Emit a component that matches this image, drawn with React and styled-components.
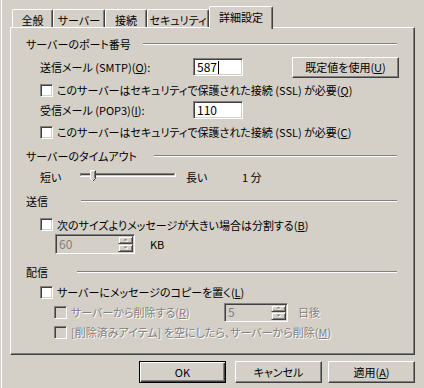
import React from 'react';
import styled, { createGlobalStyle } from 'styled-components';

const Global = createGlobalStyle`
  html, body { margin: 0; padding: 0; background: #D4D0C8; }
  body { font-family: "Noto Sans CJK JP", "Noto Sans", sans-serif; font-size: 11px; }
`;

const Window = styled.div`
  box-sizing: border-box;
  width: 424px;
  height: 388px;
  padding: 6px 9px 0 10px;
  background: linear-gradient(to right, #D4D0C8 1px, #fff 1px, #fff 2px, #D4D0C8 2px);
  font-family: "Noto Sans CJK JP", "Noto Sans", sans-serif;
  font-size: 11px;
  line-height: 14px;
  color: #000;
  font-feature-settings: "palt";
  display: flex;
  flex-direction: column;
`;

const TabStrip = styled.div`
  display: flex;
  align-items: flex-end;
  height: 21px;
  padding-left: 2px;
  flex-shrink: 0;
`;

const Tab = styled.div`
  box-sizing: border-box;
  width: ${p => p.$w}px;
  height: ${p => (p.$active ? 23 : 18)}px;
  margin-bottom: ${p => (p.$active ? -2 : 0)}px;
  padding-top: ${p => (p.$active ? 0 : 2)}px;
  padding-bottom: ${p => (p.$active ? 3 : 0)}px;
  display: flex;
  align-items: center;
  justify-content: center;
  background: #D4D0C8;
  border-left: 1px solid #fff;
  border-top: 1px solid #fff;
  border-right: 1px solid #404040;
  box-shadow: inset -1px 0 0 #808080, inset 1px 1px 0 #D4D0C8;
  border-top-left-radius: 2px;
  border-top-right-radius: 2px;
  position: relative;
  z-index: ${p => (p.$active ? 1 : 0)};
  white-space: nowrap;
`;

const Panel = styled.div`
  box-sizing: border-box;
  width: 405px;
  height: 328px;
  flex-shrink: 0;
  border: 1px solid;
  border-color: #fff #404040 #404040 #fff;
  box-shadow: inset -1px -1px 0 #808080, inset 1px 1px 0 #D4D0C8;
  padding: 1px;
  display: flex;
  flex-direction: column;
`;

const Row = styled.div`
  display: flex;
  align-items: center;
  flex-shrink: 0;
  height: ${p => p.$h || 20}px;
  margin-top: ${p => p.$mt || 0}px;
  padding-left: ${p => p.$indent || 28}px;
  white-space: nowrap;
`;

const GroupLabel = styled.span`
  width: ${p => p.$w}px;
  flex-shrink: 0;
`;

const Etched = styled.div`
  flex: 1;
  box-sizing: border-box;
  height: 2px;
  margin-right: 16px;
  border-top: 1px solid #808080;
  border-bottom: 1px solid #fff;
`;

const Label = styled.span`
  width: ${p => (p.$w ? `${p.$w}px` : 'auto')};
  margin-left: ${p => p.$ml || 0}px;
  flex-shrink: 0;
  color: ${p => (p.$disabled ? '#808080' : '#000')};
  text-shadow: ${p => (p.$disabled ? '1px 1px 0 #fff' : 'none')};
`;

const Edit = styled.div`
  box-sizing: border-box;
  width: ${p => p.$w}px;
  height: ${p => p.$h}px;
  border: 1px solid;
  border-color: #808080 #fff #fff #808080;
  box-shadow: inset 1px 1px 0 #404040, inset -1px -1px 0 #D4D0C8;
  background: ${p => (p.$disabled ? '#D4D0C8' : '#fff')};
  color: ${p => (p.$disabled ? '#808080' : '#000')};
  display: flex;
  align-items: center;
  padding: 1px 1px 1px 3px;
  flex-shrink: 0;
  font-size: 12px;
`;

const Caret = styled.span`
  display: inline-block;
  width: 1px;
  height: 13px;
  background: #000;
  margin-left: 1px;
`;

const EditText = styled.span`
  flex: 1;
`;

const SpinCol = styled.div`
  display: flex;
  flex-direction: column;
  width: 15px;
  align-self: stretch;
`;

const SpinBtn = styled.div`
  flex: 1;
  box-sizing: border-box;
  border: 1px solid;
  border-color: #D4D0C8 #404040 #404040 #D4D0C8;
  box-shadow: inset 1px 1px 0 #fff, inset -1px -1px 0 #808080;
  background: #D4D0C8;
  display: flex;
  align-items: center;
  justify-content: center;
`;

const Button = styled.div`
  box-sizing: border-box;
  width: ${p => p.$w}px;
  height: ${p => p.$h || 22}px;
  margin-left: ${p => p.$ml || 0}px;
  display: flex;
  align-items: center;
  justify-content: center;
  flex-shrink: 0;
  background: #D4D0C8;
  border: 1px solid;
  border-color: ${p => (p.$default ? '#000' : '#fff #404040 #404040 #fff')};
  box-shadow: ${p =>
    p.$default
      ? 'inset 1px 1px 0 #fff, inset -1px -1px 0 #404040, inset -2px -2px 0 #808080'
      : 'inset -1px -1px 0 #808080'};
`;

const Check = styled.div`
  box-sizing: border-box;
  width: 13px;
  height: 13px;
  flex-shrink: 0;
  border: 1px solid;
  border-color: #808080 #fff #fff #808080;
  box-shadow: inset 1px 1px 0 #404040, inset -1px -1px 0 #D4D0C8;
  background: ${p => (p.$disabled ? '#D4D0C8' : '#fff')};
  margin-right: 4px;
`;

const ButtonRow = styled.div`
  display: flex;
  justify-content: flex-end;
  margin-top: 6px;
`;

const Arrow = ({ up }) => (
  <svg width="5" height="4" viewBox="0 0 5 4">
    {up ? (
      <>
        <polygon points="2.5,0.5 4.5,2.5 0.5,2.5" fill="#fff" transform="translate(1,1)" />
        <polygon points="2.5,0.5 4.5,2.5 0.5,2.5" fill="#808080" />
      </>
    ) : (
      <>
        <polygon points="0.5,0.5 4.5,0.5 2.5,2.5" fill="#fff" transform="translate(1,1)" />
        <polygon points="0.5,0.5 4.5,0.5 2.5,2.5" fill="#808080" />
      </>
    )}
  </svg>
);

const Spinner = ({ w, h, value }) => (
  <Edit $w={w} $h={h} $disabled>
    <EditText>{value}</EditText>
    <SpinCol>
      <SpinBtn><Arrow up /></SpinBtn>
      <SpinBtn><Arrow /></SpinBtn>
    </SpinCol>
  </Edit>
);

const Slider = () => (
  <svg width="96" height="12" viewBox="0 0 96 12" style={{ flexShrink: 0, marginTop: -2 }}>
    <rect x="0" y="3" width="95" height="1" fill="#808080" />
    <rect x="0" y="3" width="1" height="4" fill="#808080" />
    <rect x="1" y="4" width="93" height="1" fill="#404040" />
    <rect x="1" y="5" width="93" height="1" fill="#D4D0C8" />
    <rect x="0" y="6" width="96" height="1" fill="#fff" />
    <rect x="95" y="3" width="1" height="4" fill="#fff" />
    <polygon points="10,0 16,0 16,8 13,11 10,8" fill="#D4D0C8" />
    <polyline points="10.5,8.5 10.5,0.5 15.5,0.5" fill="none" stroke="#fff" strokeWidth="1" />
    <polyline points="15.5,0.5 15.5,8.5 13,11" fill="none" stroke="#404040" strokeWidth="1" />
    <polyline points="14.5,1.5 14.5,8" fill="none" stroke="#808080" strokeWidth="1" />
    <line x1="10.5" y1="8.5" x2="13" y2="11" stroke="#fff" strokeWidth="1" />
  </svg>
);

const Header = ({ children, w, mt }) => (
  <Row $indent={14} $mt={mt}>
    <GroupLabel $w={w}>{children}</GroupLabel>
    <Etched />
  </Row>
);

export default function App() {
  return (
    <>
      <Global />
      <Window>
        <TabStrip>
          <Tab $w={41}>全般</Tab>
          <Tab $w={52}>サーバー</Tab>
          <Tab $w={42}>接続</Tab>
          <Tab $w={62}>セキュリティ</Tab>
          <Tab $w={64} $active>詳細設定</Tab>
        </TabStrip>
        <Panel>
          <Header w={117} mt={5}>サーバーのポート番号</Header>
          <Row $mt={3}>
            <Label $w={153}>送信メール (SMTP)(<u>O</u>):</Label>
            <Edit $w={50} $h={18}>
              <span>587</span><Caret />
            </Edit>
            <Button $w={107} $h={21} $ml={49}>既定値を使用(<u>U</u>)</Button>
          </Row>
          <Row $mt={3}>
            <Check />
            <Label>このサーバーはセキュリティで保護された接続 (SSL) が必要(<u>Q</u>)</Label>
          </Row>
          <Row $mt={0}>
            <Label $w={153}>受信メール (POP3)(<u>I</u>):</Label>
            <Edit $w={50} $h={18}>
              <span>110</span>
            </Edit>
          </Row>
          <Row $mt={2}>
            <Check />
            <Label>このサーバーはセキュリティで保護された接続 (SSL) が必要(<u>C</u>)</Label>
          </Row>
          <Header w={128} mt={4}>サーバーのタイムアウト</Header>
          <Row $mt={1}>
            <Label $w={40}>短い</Label>
            <Slider />
            <Label $w={56} $ml={10}>長い</Label>
            <Label>1 分</Label>
          </Row>
          <Header w={55} mt={4}>送信</Header>
          <Row $mt={4} $h={19}>
            <Check />
            <Label>次のサイズよりメッセージが大きい場合は分割する(<u>B</u>)</Label>
          </Row>
          <Row $mt={0} $indent={43}>
            <Spinner w={80} h={20} value="60" />
            <Label $ml={15}>KB</Label>
          </Row>
          <Header w={51} mt={8}>配信</Header>
          <Row $mt={0}>
            <Check />
            <Label>サーバーにメッセージのコピーを置く(<u>L</u>)</Label>
          </Row>
          <Row $mt={0} $indent={42}>
            <Check $disabled />
            <Label $w={153} $disabled>サーバーから削除する(<u>R</u>)</Label>
            <Spinner w={64} h={19} value="5" />
            <Label $ml={10} $disabled>日後</Label>
          </Row>
          <Row $mt={0} $indent={42}>
            <Check $disabled />
            <Label $disabled>[削除済みアイテム] を空にしたら、サーバーから削除(<u>M</u>)</Label>
          </Row>
        </Panel>
        <ButtonRow>
          <Button $w={87} $default>OK</Button>
          <Button $w={87} $ml={9}>キャンセル</Button>
          <Button $w={87} $ml={6}>適用(<u>A</u>)</Button>
        </ButtonRow>
      </Window>
    </>
  );
}
